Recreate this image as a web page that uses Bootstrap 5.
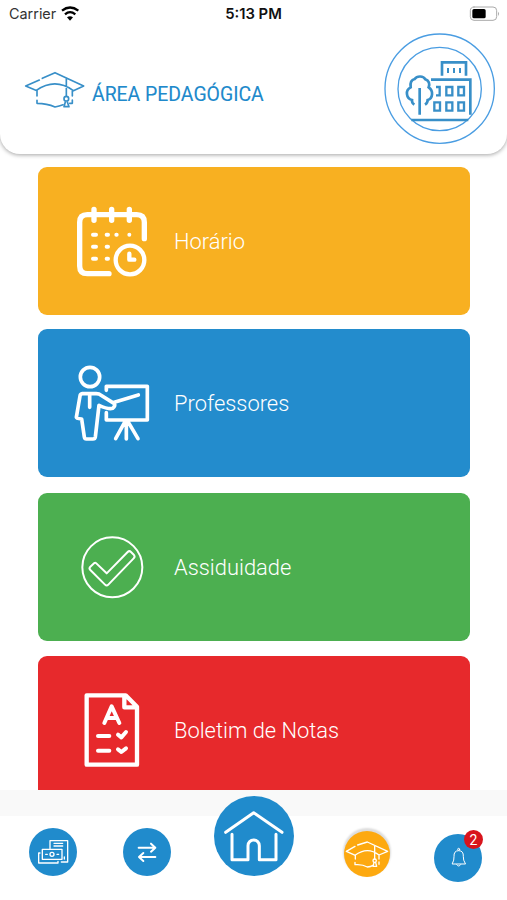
<!DOCTYPE html>
<html lang="pt">
<head>
<meta charset="utf-8">
<meta name="viewport" content="width=device-width, initial-scale=1">
<title>Área Pedagógica</title>
<link href="https://cdn.jsdelivr.net/npm/bootstrap@5.3.0/dist/css/bootstrap.min.css" rel="stylesheet">
<style>
body{font-family:Roboto,sans-serif;background:#fff}
svg{display:block;fill:none;stroke:currentColor;stroke-linecap:round;stroke-linejoin:round;flex:none}
.top-panel{height:154px;border-radius:0 0 20px 20px;box-shadow:0 1px 4px rgba(0,0,0,.36)}
.status{height:27px;font:14.4px/27px Inter,sans-serif;padding:0 7px 0 9px;color:#333}
.status .clock{color:#111;font-weight:600;font-size:14.8px;margin-right:2px;padding-top:1px}
.status>div{width:90px}
.heading{height:123px;padding:0 12px 0 23px}
.heading h1{font-size:19.4px;line-height:24px;font-weight:400;color:#2089cb;margin:12px 0 0 6px;-webkit-text-stroke:.1px}
.brand{color:#388fc8}
.tiles{height:636px;padding:13px 37px 0 38px;gap:14.9px}
.tile{height:148px;border-radius:9px;flex:none;color:#fff;font-size:21.9px;font-weight:300}
.tile span{padding-top:3px}
.tile.blue{margin:-.5px 0 .5px}
.pic{width:136px;padding-left:36px}
.pic.teacher{padding-left:35px}
.pic.calendar{padding-top:1px}
.tile svg{color:#fff}
.amber{background:#f8b021}.blue{background:#238ccd}.green{background:#4caf50}.red{background:#e7292c}
.dock{height:110px;padding-left:29px;background:linear-gradient(#f9f9f9 0 26px,#fff 26px)}
.dot{border-radius:50%;background:#208bcc;color:#fff;width:48px;height:48px;margin-top:38px;flex:none}
.dot.swap{margin-left:46px}
.dot.home{width:80px;height:80px;margin:6px 0 0 43px}
.dot.study{width:46px;height:46px;margin:41px 0 0 50px;background:#fda910;box-shadow:0 -2px 2px 1px #ddd}
.dot.bell{margin:44px 0 0 44px}
.count{right:-1px;top:-4px;width:19px;height:19px;background:#d8141c;font-size:14px;line-height:20px}
</style>
<script src="https://cdn.jsdelivr.net/npm/bootstrap@5.3.0/dist/js/bootstrap.bundle.min.js"></script>
</head>
<body>
<div class="vh-100 overflow-hidden d-flex flex-column">
<header class="top-panel bg-white flex-shrink-0 position-relative">
  <div class="status d-flex justify-content-between align-items-center">
    <div class="d-flex align-items-center"><span class="carrier">Carrier</span>
      <svg class="ms-1 text-black" width="20" height="15" viewBox="183 15 60 45" stroke-width="7"><path d="M189 29Q213 10 238 29M198 40Q213 27 229 40" stroke-linecap="butt"/><path d="M204 49Q213 42 222 49L213 59Z" fill="currentColor" stroke="none"/></svg></div>
    <span class="clock">5:13 PM</span>
    <div class="d-flex justify-content-end"><svg width="31" height="15" viewBox="1409 16 93 45"><rect x="1413" y="19" width="79" height="40" rx="11" stroke="#aaa" stroke-width="3"/><rect x="1419" y="25" width="40" height="28" rx="5" fill="#000" stroke="none"/><path d="M1496 33q6 6 0 13z" fill="#aaa" stroke="none"/></svg></div>
  </div>
  <div class="heading d-flex align-items-center">
    <svg class="brand mt-1" width="63" height="40" viewBox="40 45 189 120" stroke-width="5"><path d="M89 72L48 90L82 104V120M98 67L136 50L222 90L188 106V120M80 103Q136 64 190 103M82 133V142Q112 142 136 153Q149 150 160 146M188 132V142H180M170 67V121"/><circle cx="170" cy="128" r="7"/><path d="M167 138L163 152H178L173 138"/></svg>
    <h1>ÁREA PEDAGÓGICA</h1>
    <svg class="brand ms-auto" width="111" height="111" viewBox="27 25 333 333" stroke-width="8"><g stroke="#4a9de2" stroke-width="4"><circle cx="194" cy="192" r="164"/><circle cx="194" cy="193" r="125"/></g><g stroke-linecap="butt" stroke-linejoin="miter"><path d="M201 153V113H273V153M168 165H286V270M109 286H280M134 270V190"/><path d="M219 130V145M237 130V145M255 130V145" stroke-width="6"/><path d="M118 240Q110 235 111 226C93 221 90 196 107 188C104 168 115 164 119 163C126 153 145 153 151 164C162 168 165 178 161 188C176 198 174 221 158 226Q158 235 150 240"/><path d="M183 187H194V212H183M214 187H232V212H214ZM250 187H267V212H250ZM178 233H195V258H178ZM214 233H232V258H214ZM250 233H267V258H250Z" stroke-width="7"/></g></svg>
  </div>
</header>
<main class="tiles d-flex flex-column overflow-hidden flex-shrink-0">
  <section class="tile amber d-flex align-items-center"><div class="pic calendar"><svg width="76" height="76" viewBox="42 41 228 228" stroke-width="16"><path d="M253 145V96Q253 73 230 73H82Q59 73 59 96V227Q59 250 82 250H147M102 57V90M155 57V90M208 57V90"/><circle cx="210" cy="209" r="43" stroke-width="13"/><path d="M208 190V208H223" stroke-width="13"/><path d="M99 133H108M140 133H144M169 133H170M208 133H208M99 169H108M140 169H144M99 205H108M140 205H144" stroke-width="12"/></svg></div><span>Horário</span></section>
  <section class="tile blue d-flex align-items-center"><div class="pic teacher"><svg width="78" height="80" viewBox="39 39 234 240" stroke-width="11"><circle cx="90" cy="81" r="29"/><path d="M89 132V172M104 131H67Q61 132 60 138L49 202Q49 206 65 207L73 261Q74 267 79 267H99Q105 267 106 261L117 166Q146 179 158 175Q167 168 163 161L117 132Q111 130 104 131M163 157L235 135M139 121V109H262V210H139V188M199 213V267M195 215L167 266M204 215L234 266" /></svg></div><span>Professores</span></section>
  <section class="tile green d-flex align-items-center"><div class="pic"><svg width="76" height="68" viewBox="42 40 228 204" stroke-width="6"><circle cx="157" cy="143" r="90"/><path d="M91 141L103 130Q106 128 109 131L140 161L203 97Q208 92 213 97L222 106Q226 111 221 116L145 195Q140 200 135 195L91 151Q86 146 91 141Z" stroke-width="6"/></svg></div><span>Assiduidade</span></section>
  <section class="tile red d-flex align-items-center"><div class="pic"><svg width="76" height="80" viewBox="42 31 228 240"><path d="M80 47H197L231 81V255H80ZM193 47V83H231" stroke-width="13"/><path d="M133 130L155 80L178 130M142 115H169M114 169H148M114 213H148M174 165L184 173L198 157M174 209L184 217L198 206" stroke-width="12"/></svg></div><span>Boletim de Notas</span></section>
</main>
<nav class="dock d-flex align-items-start flex-shrink-0">
  <a class="dot d-flex align-items-center justify-content-center"><svg width="32" height="26" viewBox="111 177 96 78" stroke-width="4"><path d="M127 208H186V238H127ZM150 205V182H203V246H184M120 219H116V249H174V244M162 190H188M162 198H188M137 223H142M171 223H176M193 231V237"/><circle cx="156" cy="223" r="6"/></svg></a>
  <a class="dot swap d-flex align-items-center justify-content-center"><svg width="20" height="22" viewBox="411 183 60 66" stroke-width="6"><path d="M416 203H466M453 191L466 203L453 215M466 231H417M430 219L417 231L430 243"/></svg></a>
  <a class="dot home d-flex align-items-center justify-content-center"><svg width="80" height="80" viewBox="42 48 240 240" stroke-width="9"><path d="M77 157L161 98L246 157M96 163V239H144V197A17 17 0 0 1 178 197V239H228V163"/></svg></a>
  <a class="dot study d-flex align-items-center justify-content-center"><svg width="46" height="46" viewBox="73 153 138 138" stroke-width="4"><path d="M106 199L80 214L107 226V237M114 195L143 186L204 214L178 225V237M106 226Q143 198 178 225M106 247V254Q128 252 143 261Q153 260 160 256M178 246V253M165 199V237"/><circle cx="165" cy="242" r="5"/><path d="M163 248L160 259H171L168 248"/></svg></a>
  <a class="dot bell d-flex align-items-center justify-content-center position-relative"><svg width="48" height="48" viewBox="343 162 144 144" stroke-width="3"><path d="M398 251Q404 240 403 230Q402 212 417 212Q432 212 431 230Q430 240 437 251ZM411 254Q417 263 423 254"/><circle cx="417" cy="208" r="3"/></svg><span class="count position-absolute rounded-circle text-center">2</span></a>
</nav>
</div>
</body>
</html>
